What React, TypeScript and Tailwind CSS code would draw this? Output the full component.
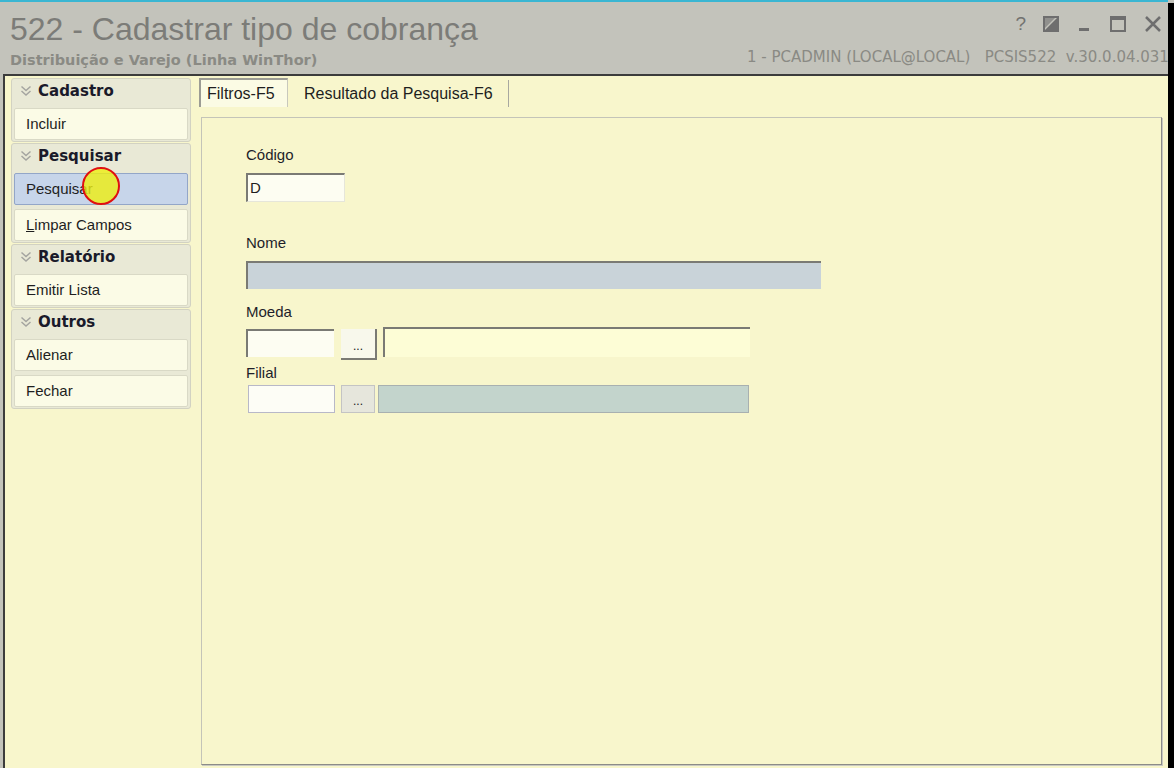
const font = { fontFamily: '"Liberation Sans", Arial, sans-serif' };
const wide = { fontFamily: '"DejaVu Sans", Verdana, sans-serif' };

type Item = { label: string; selected?: boolean; accel?: boolean };
type Group = { title: string; items: Item[] };

const groups: Group[] = [
  { title: 'Cadastro', items: [{ label: 'Incluir' }] },
  { title: 'Pesquisar', items: [{ label: 'Pesquisar', selected: true }, { label: 'Limpar Campos', accel: true }] },
  { title: 'Relatório', items: [{ label: 'Emitir Lista' }] },
  { title: 'Outros', items: [{ label: 'Alienar' }, { label: 'Fechar' }] },
];

function Chevrons() {
  return (
    <svg width="12" height="12" viewBox="0 0 12 12" className="shrink-0">
      <path d="M1.5 1.5 L6 5.5 L10.5 1.5 M1.5 6 L6 10 L10.5 6" fill="none" stroke="#a4a4a0" strokeWidth="1.5" />
    </svg>
  );
}

function SideGroup({ group }: { group: Group }) {
  return (
    <div className="flex flex-col rounded-[3px] border border-[#d2d2c2] bg-[#e9e9d6] px-[2px] pt-[1px] pb-[1px]">
      <div className="flex h-[22px] items-center gap-[6px] pl-[6px]">
        <Chevrons />
        <span className="text-[15px] font-bold text-[#1a1a2a]" style={wide}>
          {group.title}
        </span>
      </div>
      <div className="mt-[6px] flex flex-col gap-[4px]">
        {group.items.map((it) => (
          <div
            key={it.label}
            className={`flex h-[32px] items-center rounded-[2px] border pl-[11px] text-[15px] text-[#1e1e1e] ${
              it.selected ? 'border-[#93a6c8] bg-[#c7d5ea]' : 'border-[#d9d9c6] bg-[#fbfbe6]'
            }`}
          >
            {it.accel ? (
              <span>
                <span className="underline">L</span>impar Campos
              </span>
            ) : (
              it.label
            )}
          </div>
        ))}
      </div>
    </div>
  );
}

function Dots() {
  return <span className="text-[12px] leading-none text-[#202020]">...</span>;
}

export default function App() {
  return (
    <div className="relative flex h-[768px] w-[1174px] overflow-hidden bg-[#c3c3bb]" style={font}>
      <div className="flex w-[1168px] flex-col overflow-hidden">
        <div className="h-[2px] bg-[#3ab6d2]" />
        {/* title bar */}
        <div className="flex h-[72px] bg-[#c3c3bb] pl-[10px]">
          <div className="flex flex-col">
            <div className="mt-[10px] whitespace-nowrap text-[32px] leading-[35px] text-[#7c7c78]">
              522 - Cadastrar tipo de cobrança
            </div>
            <div className="mt-[4px] whitespace-nowrap text-[14.5px] font-bold leading-[18px] text-[#8a8a84]" style={wide}>
              Distribuição e Varejo (Linha WinThor)
            </div>
          </div>
          <div className="ml-auto flex w-[421px] shrink-0 flex-col">
            <div className="mt-[12px] flex items-center justify-end gap-[17px] pr-[6px] text-[#727270]">
              <span className="text-[19px] leading-none">?</span>
              <svg width="16" height="16" viewBox="0 0 16 16">
                <rect x="1" y="1" width="14" height="14" fill="none" stroke="#6e6e6e" strokeWidth="2" />
                <polygon points="1,15 15,1 15,15" fill="#6e6e6e" />
                <polygon points="1,1 13,1 1,13" fill="#6e6e6e" opacity="0.6" />
              </svg>
              <svg width="16" height="16" viewBox="0 0 16 16">
                <rect x="3" y="12" width="10" height="3" fill="#6e6e6e" />
              </svg>
              <svg width="18" height="18" viewBox="0 0 18 18">
                <rect x="2" y="2" width="14" height="14" fill="none" stroke="#6e6e6e" strokeWidth="2" />
                <rect x="2" y="2" width="14" height="3" fill="#6e6e6e" />
              </svg>
              <svg width="18" height="18" viewBox="0 0 18 18">
                <path d="M2 2 L16 16 M16 2 L2 16" stroke="#6e6e6e" strokeWidth="2.5" />
              </svg>
            </div>
            <div className="mt-[15px] whitespace-nowrap text-[15px] leading-[18px] text-[#8a8a84]" style={wide}>
              1 - PCADMIN (LOCAL@LOCAL)&nbsp;&nbsp; PCSIS522&nbsp; v.30.0.04.031
            </div>
          </div>
        </div>
        {/* body */}
        <div className="ml-[3px] flex flex-1 border-t-2 border-l-2 border-[#3c3c3c] bg-[#f8f6cc]">
          <div className="ml-[6px] mt-[2px] flex w-[180px] flex-col gap-[1px]">
            {groups.map((g) => (
              <SideGroup key={g.title} group={g} />
            ))}
          </div>
          <div className="ml-[8px] mt-[2px] flex flex-1 flex-col pr-[6px] pb-[3px]">
            {/* tabs */}
            <div className="flex h-[29px] items-end">
              <div className="flex h-[29px] w-[89px] items-center border-t-2 border-l-2 border-r border-t-[#9c9c94] border-l-[#9c9c94] border-r-[#c8c8bc] bg-[#fbfbe4] pl-[6px] text-[16px] text-[#1e1e1e]">
                Filtros-F5
              </div>
              <div className="flex h-[27px] w-[221px] items-center border-r border-[#a8a8a0] pl-[16px] text-[16px] text-[#1e1e1e]">
                Resultado da Pesquisa-F6
              </div>
            </div>
            <div className="mt-[10px] ml-[2px] flex flex-1 flex-col border border-t-[#c4c4b8] border-l-[#c4c4b8] border-r-[#8c8c88] border-b-[#8c8c88] pl-[44px] pt-[28px] shadow-[1px_1px_0_#c8c8c0]">
              <div className="text-[15px] leading-[18px] text-[#1e1e2a]">Código</div>
              <div className="mt-[9px] flex h-[29px] w-[99px] items-center border-t-2 border-l-2 border-b border-r border-t-[#7a7a74] border-l-[#7a7a74] border-b-[#e6e6da] border-r-[#e6e6da] bg-[#fdfdf2] pl-[2px] text-[15px] text-[#1e1e1e]">
                D
              </div>
              <div className="mt-[32px] text-[15px] leading-[18px] text-[#1e1e2a]">Nome</div>
              <div className="mt-[9px] h-[28px] w-[575px] border-t-2 border-l-2 border-t-[#7a7a74] border-l-[#7a7a74] bg-[#c9d3d9]" />
              <div className="mt-[14px] text-[15px] leading-[18px] text-[#1e1e2a]">Moeda</div>
              <div className="mt-[6px] flex items-start">
                <div className="mt-[2px] h-[28px] w-[88px] border-t-2 border-l-2 border-t-[#7a7a74] border-l-[#7a7a74] bg-[#fdfdf2]" />
                <div className="mt-[2px] ml-[7px] flex h-[31px] w-[36px] items-center justify-center border-r-2 border-b-2 border-r-[#7a7a74] border-b-[#7a7a74] bg-[#f8f8ec] pt-[4px]">
                  <Dots />
                </div>
                <div className="ml-[6px] h-[30px] w-[367px] border-t-2 border-l-2 border-t-[#7a7a74] border-l-[#7a7a74] bg-[#fdfdd6]" />
              </div>
              <div className="mt-[4px] text-[15px] leading-[18px] text-[#1e1e2a]">Filial</div>
              <div className="mt-[3px] flex items-start">
                <div className="ml-[2px] h-[28px] w-[87px] border border-[#b8b8c8] bg-[#fdfdf6]" />
                <div className="ml-[6px] flex h-[28px] w-[34px] items-center justify-center border border-[#c4c4c4] bg-[#e6e6dc] pt-[4px]">
                  <Dots />
                </div>
                <div className="ml-[3px] h-[28px] w-[371px] border border-[#a8b0b0] bg-[#c3d4cc]" />
              </div>
            </div>
          </div>
        </div>
      </div>
      <div className="mt-[3px] w-[6px] bg-black" />
      {/* cursor highlight */}
      <div className="pointer-events-none absolute left-[82px] top-[167px] h-[38px] w-[38px] rounded-full border-2 border-[#e01010] bg-[#eeee10]/80" />
    </div>
  );
}
